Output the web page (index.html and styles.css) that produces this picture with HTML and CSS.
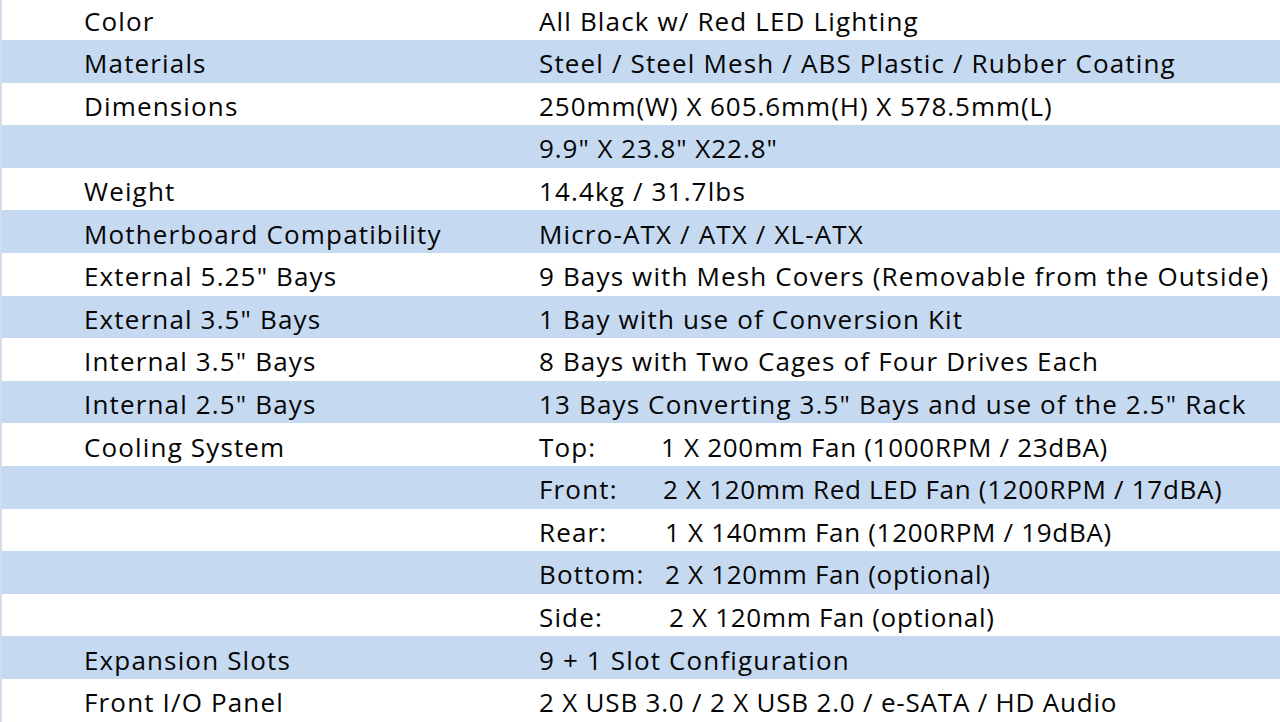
FILE: index.html
```html
<!DOCTYPE html>
<html lang="en">
<head>
<meta charset="utf-8">
<title>Specifications</title>
<link rel="stylesheet" href="styles.css">
</head>
<body>
<div class="sheet">
  <div class="row first"><div class="label">Color</div><div class="value">All Black w/ Red LED Lighting</div></div>
  <div class="row alt"><div class="label">Materials</div><div class="value">Steel / Steel Mesh / ABS Plastic / Rubber Coating</div></div>
  <div class="row"><div class="label">Dimensions</div><div class="value numeric">250mm(W) X 605.6mm(H) X 578.5mm(L)</div></div>
  <div class="row alt"><div class="label"></div><div class="value numeric">9.9" X 23.8" X22.8"</div></div>
  <div class="row"><div class="label">Weight</div><div class="value">14.4kg / 31.7lbs</div></div>
  <div class="row alt"><div class="label">Motherboard Compatibility</div><div class="value">Micro-ATX / ATX / XL-ATX</div></div>
  <div class="row"><div class="label">External 5.25" Bays</div><div class="value">9 Bays with Mesh Covers (Removable from the Outside)</div></div>
  <div class="row alt"><div class="label">External 3.5" Bays</div><div class="value">1 Bay with use of Conversion Kit</div></div>
  <div class="row"><div class="label">Internal 3.5" Bays</div><div class="value">8 Bays with Two Cages of Four Drives Each</div></div>
  <div class="row alt"><div class="label">Internal 2.5" Bays</div><div class="value">13 Bays Converting 3.5" Bays and use of the 2.5" Rack</div></div>
  <div class="row"><div class="label">Cooling System</div><div class="value"><span class="pos">Top:</span><span class="fan fan-top">1 X 200mm Fan (1000RPM / 23dBA)</span></div></div>
  <div class="row alt"><div class="label"></div><div class="value"><span class="pos">Front:</span><span class="fan fan-front">2 X 120mm Red LED Fan (1200RPM / 17dBA)</span></div></div>
  <div class="row"><div class="label"></div><div class="value"><span class="pos">Rear:</span><span class="fan fan-rear">1 X 140mm Fan (1200RPM / 19dBA)</span></div></div>
  <div class="row alt"><div class="label"></div><div class="value"><span class="pos">Bottom:</span><span class="fan fan-bottom">2 X 120mm Fan (optional)</span></div></div>
  <div class="row"><div class="label"></div><div class="value"><span class="pos">Side:</span><span class="fan fan-side">2 X 120mm Fan (optional)</span></div></div>
  <div class="row alt"><div class="label">Expansion Slots</div><div class="value">9 + 1 Slot Configuration</div></div>
  <div class="row"><div class="label">Front I/O Panel</div><div class="value io">2 X USB 3.0 / 2 X USB 2.0 / e-SATA / HD Audio</div></div>
</div>
</body>
</html>
```
FILE: styles.css
```css
html, body {
  margin: 0;
  padding: 0;
  background: #ffffff;
  overflow: hidden;
}
.sheet {
  margin-top: -2.6px;
  border-left: 2px solid #d3dceb;
  font-family: "Open Sans", "Lato", sans-serif;
  font-size: 26px;
  letter-spacing: 1.15px;
  color: #050505;
}
.row {
  display: grid;
  grid-template-columns: 537px 1fr;
  height: 42.6px;
  align-items: center;
  box-sizing: border-box;
  padding-top: 4px;
  background: #ffffff;
  white-space: nowrap;
}
.row.alt {
  background: #c5d9f1;
}
.label {
  padding-left: 82px;
}
.value {
  display: flex;
}
.value.numeric {
  letter-spacing: 0.95px;
}
.value.io {
  letter-spacing: 0.8px;
}
.pos {
  width: 122px;
}
.fan {
  letter-spacing: 0.7px;
}
.fan-front { margin-left: 2px; }
.fan-rear { margin-left: 4px; }
.fan-bottom { margin-left: 4px; }
.fan-side { margin-left: 8px; }
```
